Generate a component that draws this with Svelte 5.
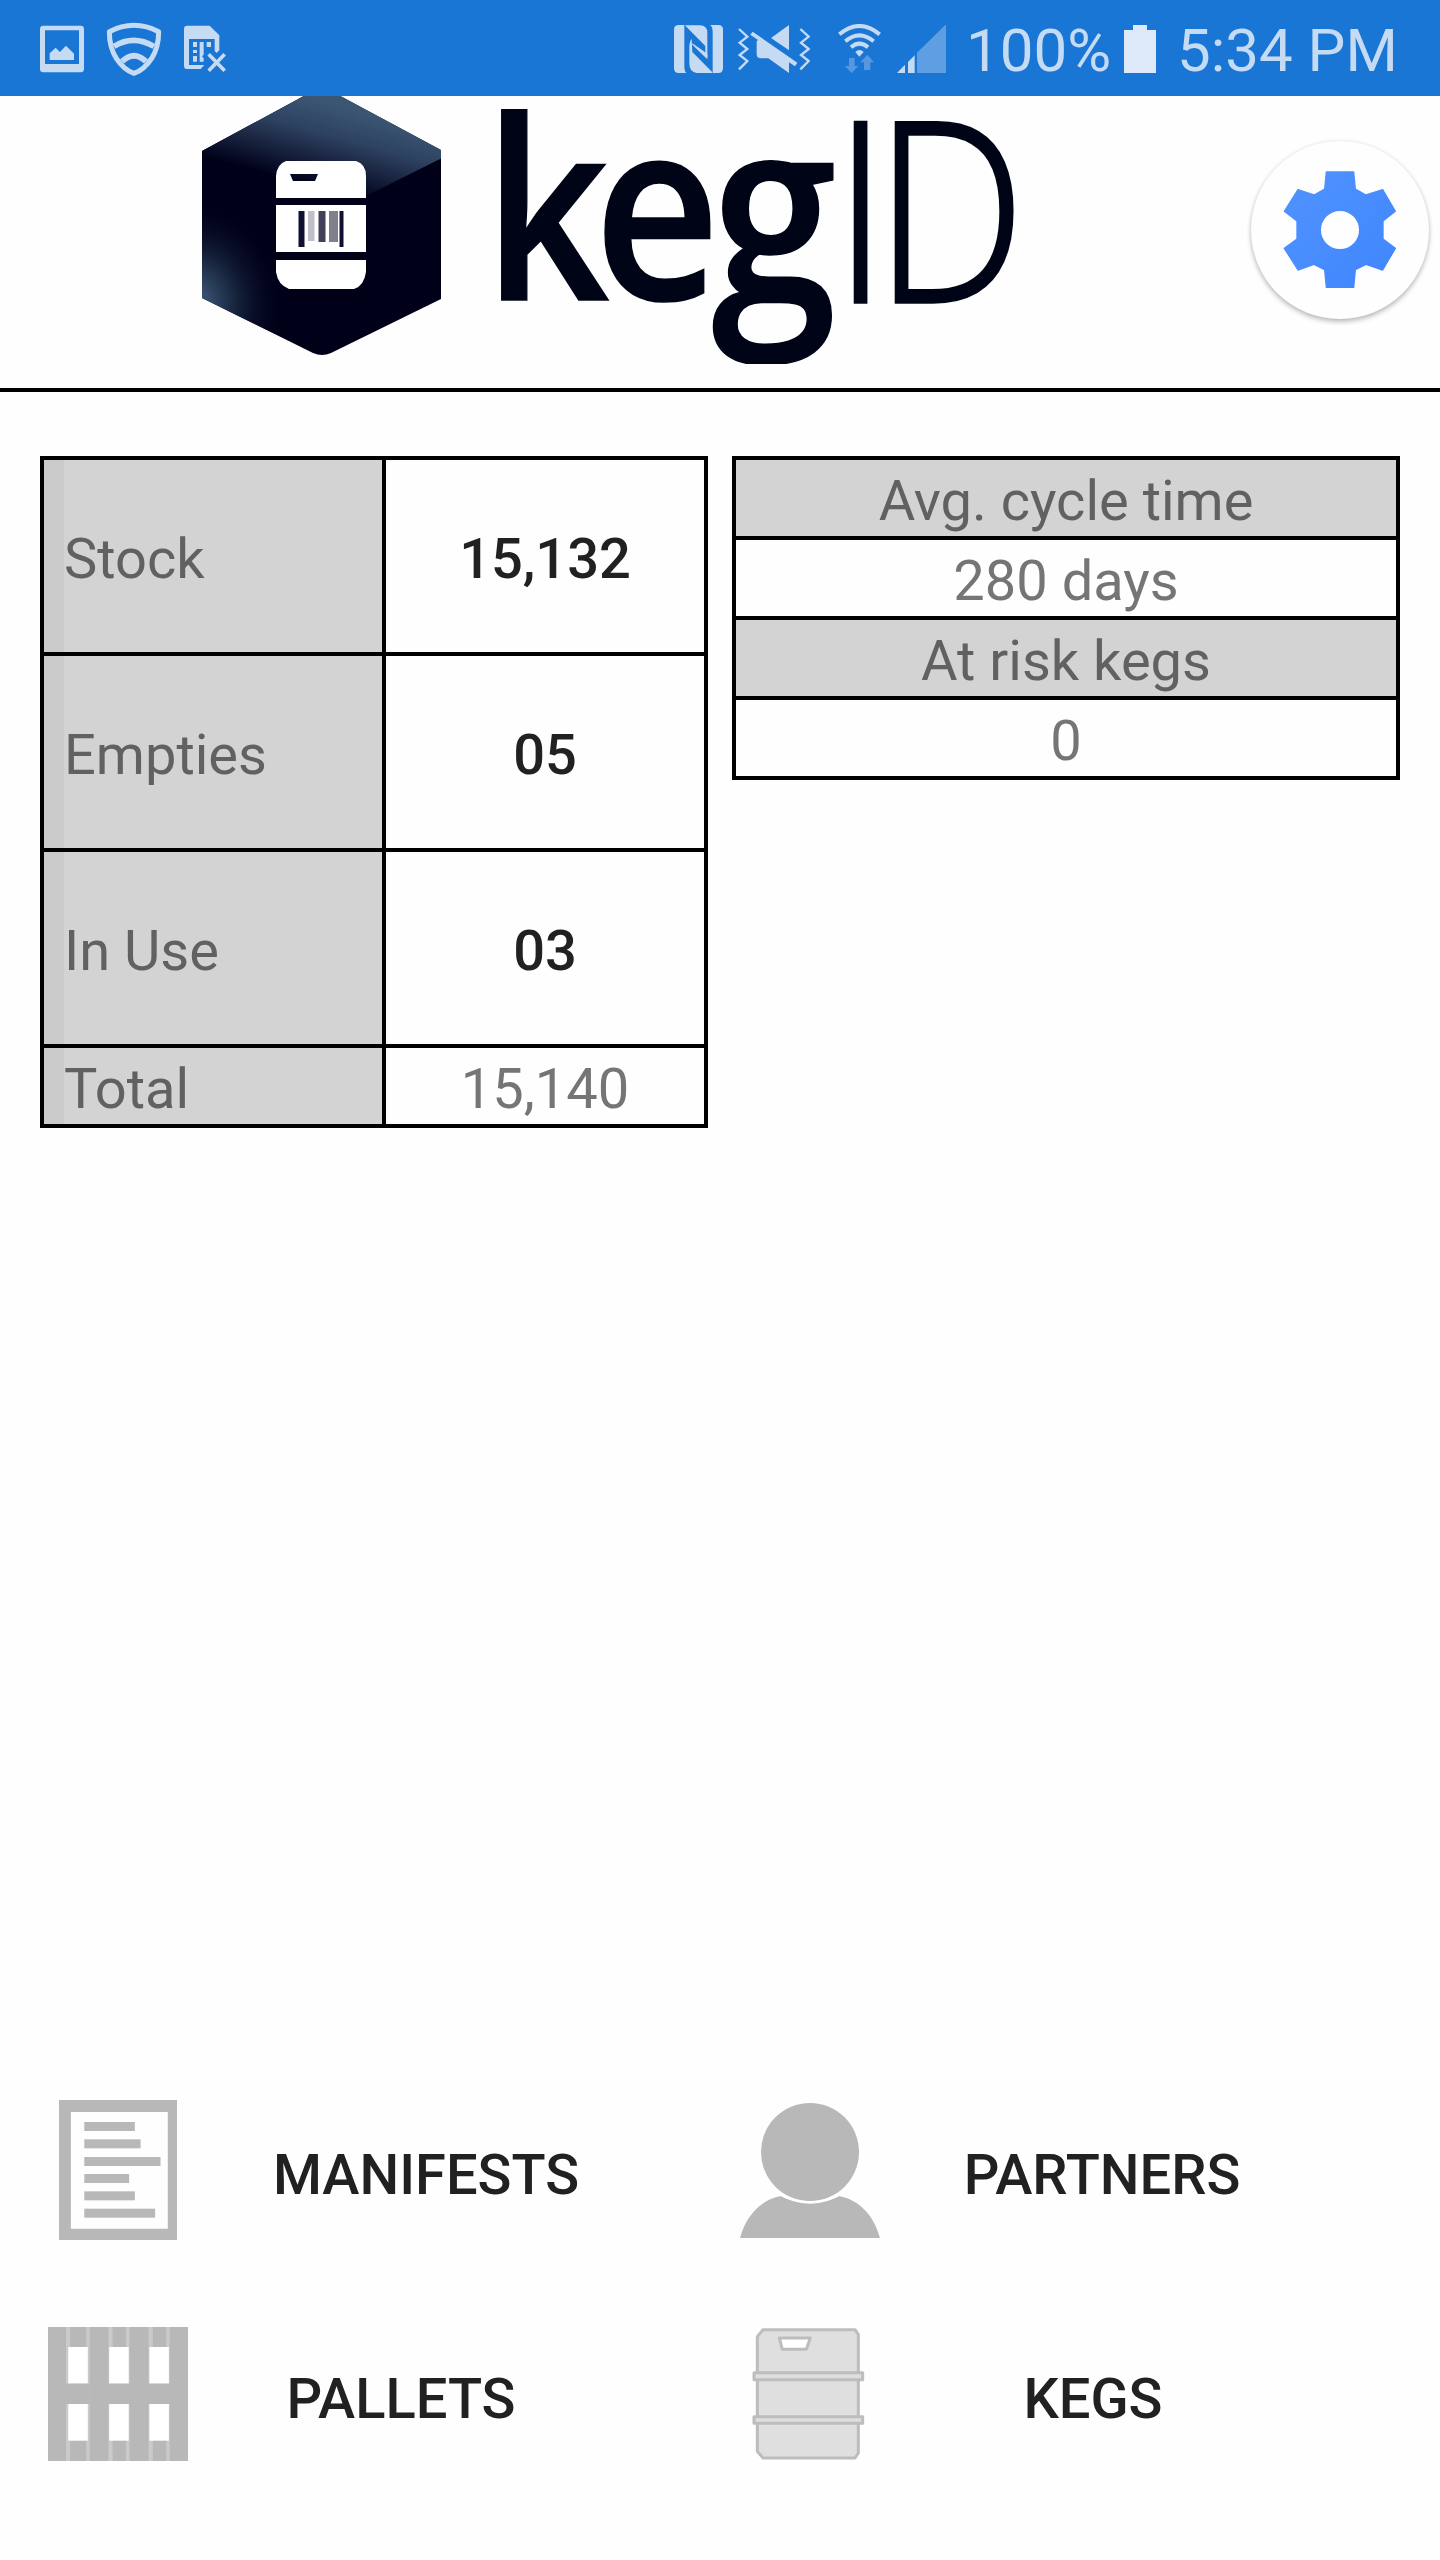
<script>
  const stock = [
    { label: 'Stock', value: '15,132' },
    { label: 'Empties', value: '05' },
    { label: 'In Use', value: '03' },
    { label: 'Total', value: '15,140', total: true }
  ];
  const metrics = [
    { label: 'Avg. cycle time', value: '280 days' },
    { label: 'At risk kegs', value: '0' }
  ];
  const manifestLines = [
    { y: 126, w: 132 }, { y: 178, w: 147 }, { y: 231, w: 199 },
    { y: 282, w: 117 }, { y: 334, w: 132 }, { y: 386, w: 185 }
  ];
</script>

<div class="screen">
  <div class="status">
    <svg class="photo" width="44" height="48" viewBox="120 75 132 144">
      <path fill-rule="evenodd" d="M130 77H242Q252 77 252 87V207Q252 217 242 217H130Q120 217 120 207V87Q120 77 130 77ZM135 91V192H237V91ZM149 180V160L167 143L180 156L198 137L222 161V180Z" />
    </svg>
    <svg class="shield" width="56" height="54" viewBox="318 66 168 162">
      <g fill="none" stroke="#c5dbf4" stroke-width="15" stroke-linejoin="round">
        <path d="M328 95Q364 76 402 76Q440 76 476 95Q476 142 455 175Q432 210 402 220Q372 210 349 175Q328 142 328 95Z" />
        <path d="M342 139Q400 103 462 139" stroke-width="17" />
        <path d="M366 184Q402 150 438 184" stroke-width="17" />
      </g>
    </svg>
    <svg class="sim" width="44" height="48" viewBox="549 75 132 144">
      <path fill-rule="evenodd" d="M562 77H629L658 106V151L650 159L644 153V117H567V195H613L602 207H562Q552 207 552 197V87Q552 77 562 77Z" />
      <path d="M579 126h12v15h-12zM579 150h12v9h-12zM579 168h12v17h-12zM599 126h12v38l-5 5l5 6v10h-12zM620 126h13v15h-13z" />
      <path d="M626 163L674 212M674 163L626 212" fill="none" stroke="#c5dbf4" stroke-width="11" />
    </svg>
    <span class="grow"></span>
    <svg class="nfc" width="49" height="48" viewBox="42 45 147 144">
      <path d="M56 45H73V168Q73 184 79 189H56Q42 189 42 175V59Q42 45 56 45Z" />
      <path d="M175 45H151Q158 51 158 66V189H175Q189 189 189 175V59Q189 45 175 45Z" />
      <path d="M76 46H119Q142 46 142 69V144L136 138V108L76 47Z" />
      <path d="M88 189V112Q88 95 95 86L97 126L157 187V189H110Q88 187 88 160Z" fill-rule="evenodd" />
      <path d="M96 102L135 133V110L96 84Z" fill="#1a76d5" />
      <path d="M97 104L142 148V131L97 100Z" />
    </svg>
    <svg class="mute" width="73" height="48" viewBox="231 45 219 144">
      <g fill="none" stroke="#c5dbf4" stroke-width="7">
        <path d="M237 57L262 80L239 98L262 117L239 135L262 153L237 178" />
        <path d="M421 57L446 80L423 98L446 117L423 135L446 153L421 178" />
      </g>
      <path d="M387 45V121L333 84ZM278 65L412 158L405 169L387 157V189L325 145H303Q290 145 290 132V94L294 90L271 74Z" />
    </svg>
    <svg class="wifi" width="43" height="50" viewBox="534 42 129 150">
      <g fill="none" stroke="#c5dbf4" stroke-width="12">
        <path d="M538 73Q598 23 659 73" />
        <path d="M556 94Q598 58 641 94" />
        <path d="M573 112Q598 90 624 112" />
      </g>
      <path d="M586 126Q598 114 611 126L598 140Z" />
      <path opacity=".35" d="M567 144H584V168H595L575 190L555 168H567ZM622 134L642 157H631V180H612V157H601Z" />
    </svg>
    <svg class="signal" width="50" height="48" viewBox="708 45 150 144">
      <path d="M711 189L735 164V189ZM744 189V156L764 136V189Z" />
      <path opacity=".4" d="M771 189V128L858 43V189Z" />
    </svg>
    <span class="percent">100%</span>
    <svg class="battery" width="32" height="48" viewBox="0 0 32 48">
      <path fill="#dde9f8" d="M9 0H23V5H32V48H0V5H9Z" />
    </svg>
    <span class="clock">5:34 PM</span>
  </div>

  <header>
    <svg class="logo" width="814" height="268" viewBox="202 96 814 268">
      <defs>
        <linearGradient id="sheen" gradientUnits="userSpaceOnUse" x1="345" y1="108" x2="322" y2="190">
          <stop offset="0" stop-color="#3a5673" />
          <stop offset=".35" stop-color="#2e4261" />
          <stop offset="1" stop-color="#000018" />
        </linearGradient>
        <radialGradient id="glow" gradientUnits="userSpaceOnUse" cx="198" cy="300" r="105" gradientTransform="translate(198 300) rotate(-12) scale(.85 1) translate(-198 -300)">
          <stop offset="0" stop-color="#3d5c7a" />
          <stop offset=".45" stop-color="#142039" />
          <stop offset="1" stop-color="#000018" stop-opacity="0" />
        </radialGradient>
        <clipPath id="hex"><path d="M202 151L313 91Q322 86 331 91L441 150V299L331 353Q322 357 313 353L202 298Z" /></clipPath>
      </defs>
      <g clip-path="url(#hex)">
        <rect x="200" y="90" width="244" height="270" fill="#000018" />
        <path d="M200 90H444V157L366 196L276 182L200 158Z" fill="url(#sheen)" />
        <rect x="200" y="150" width="244" height="210" fill="url(#glow)" />
      </g>
      <path fill="#fff" fill-rule="evenodd" d="M286 161H356Q366 164 366 176V198H276V176Q277 164 286 161ZM290 174L293 181H315L318 174Z" />
      <rect x="276" y="205" width="90" height="47" fill="#fff" />
      <path fill="#fff" d="M276 260H366V272Q364 286 354 289H289Q278 285 276 272Z" />
      <rect x="298.500" y="211" width="6" height="36" fill="#101030" />
      <rect x="308" y="211" width="6.500" height="30" fill="#c0c0c8" />
      <rect x="318.500" y="211" width="7" height="31" fill="#404058" />
      <rect x="329" y="211" width="9" height="31" fill="#80808c" />
      <rect x="339.500" y="211" width="4" height="36" fill="#101030" />
      <g fill="#000417" stroke="#000417" font-family="'Open Sans', sans-serif">
        <text transform="translate(0 300) scale(.875 1)" x="553 679 813" font-size="250" font-weight="600" stroke-width="1.500">ke<tspan font-size="258" dy="3">g</tspan></text>
        <text transform="translate(0 302) scale(.85 1)" x="981 1029" font-size="251" font-weight="300" stroke-width="3.500">ID</text>
      </g>
    </svg>
    <button class="fab" aria-label="Settings">
      <svg width="118" height="118" viewBox="183 153 354 354">
        <defs>
          <linearGradient id="gear" x1="0" y1="0" x2="1" y2="1">
            <stop offset="0" stop-color="#5093ff" />
            <stop offset="1" stop-color="#4086fd" />
          </linearGradient>
        </defs>
        <path fill="url(#gear)" stroke="url(#gear)" stroke-width="4" stroke-linejoin="round" fill-rule="evenodd" d="M319 156H401L406 207L438 225L488 209L526 274L489 303V357L526 385L488 450L438 433L406 449L401 502H319L314 449L282 433L234 450L193 385L231 357V303L193 274L234 209L282 225L314 207ZM360 271A59 59 0 1 0 360 389A59 59 0 1 0 360 271Z" />
      </svg>
    </button>
  </header>

  <main>
    <div class="table stock">
      {#each stock as row}
        <div class="row" class:total={row.total}>
          <div class="label">{row.label}</div>
          <div class="value">{row.value}</div>
        </div>
      {/each}
    </div>
    <div class="table metrics">
      {#each metrics as m}
        <div class="cell head">{m.label}</div>
        <div class="cell">{m.value}</div>
      {/each}
    </div>
  </main>

  <nav>
    <a class="item manifests" href="#manifests">
      <svg width="118" height="140" viewBox="102 60 308 420" preserveAspectRatio="none">
        <path fill="#b8b8b8" fill-rule="evenodd" d="M102 60H410V480H102ZM133 96V446H386V96Z" />
        {#each manifestLines as l}
          <rect x="168" y={l.y} width={l.w} height="27" fill="#b8b8b8" />
        {/each}
      </svg>
      <span>MANIFESTS</span>
    </a>
    <a class="item partners" href="#partners">
      <svg width="140" height="135" viewBox="0 0 140 135">
        <g fill="#b8b8b8">
          <circle cx="70" cy="49" r="49" />
          <path d="M0 135C6 113 20 97 41 93Q70 107 99 93C120 97 134 113 140 135Z" />
        </g>
        <path d="M36 89Q70 110 104 89" fill="none" stroke="#fff" stroke-width="2.500" />
      </svg>
      <span>PARTNERS</span>
    </a>
    <a class="item pallets" href="#pallets">
      <svg width="140" height="134" viewBox="73 741 366 402" preserveAspectRatio="none">
        <rect x="73" y="741" width="366" height="402" fill="#b8b8b8" />
        {#each [[120, 186], [231, 290], [336, 395]] as [a, b]}
          <rect x={a} y="741" width="11" height="402" fill="#cacaca" />
          <rect x={b - 13} y="741" width="9" height="402" fill="#cacaca" />
        {/each}
        {#each [126, 233, 338] as x}
          <rect {x} y="801" width="51" height="110" fill="#fff" />
          <rect x={x - 6} y="911" width="62" height="61" fill="#b8b8b8" />
          <rect {x} y="972" width="51" height="110" fill="#fff" />
        {/each}
      </svg>
      <span>PALLETS</span>
    </a>
    <a class="item kegs" href="#kegs">
      <svg width="114" height="134" viewBox="34 21 342 402">
        <g fill="#dfdfdf" stroke="#bdbdbd" stroke-width="9" stroke-linejoin="round">
          <path d="M70 29H346L356 44V399L346 414H70L53 394V50Z" />
          <path d="M119 54H212L200 88H128Z" fill="#fff" />
          <path d="M43 158H369V179H43ZM43 290H369V310H43Z" />
        </g>
      </svg>
      <span>KEGS</span>
    </a>
  </nav>
</div>

<style>
  :global(body) { background: #fefefe; }
  .screen {
    width: 1440px;
    height: 2560px;
    display: flex;
    flex-direction: column;
    background: #fefefe;
    font-family: Roboto, sans-serif;
    font-size: 56px;
    color: #757575;
    overflow: hidden;
  }
  svg { display: block; flex: none; }
  .status {
    box-sizing: border-box;
    height: 96px;
    flex: none;
    padding: 2px 42px 0 40px;
    display: flex;
    align-items: center;
    background: #1a76d5;
    color: #c5dbf4;
    fill: #c5dbf4;
    font-size: 60px;
    line-height: 90px;
    white-space: nowrap;
  }
  .status span { padding-top: 4px; }
  .shield { margin-left: 22px; }
  .sim { margin-left: 21px; }
  .grow { flex: 1; }
  .mute { margin-left: 14px; }
  .wifi { margin-left: 28px; }
  .signal { margin-left: 15px; }
  .percent { width: 145px; margin-left: 20px; }
  .battery { margin-left: 13px; }
  .clock { width: 221px; margin-left: 21px; }
  header {
    box-sizing: border-box;
    height: 296px;
    flex: none;
    padding: 0 11px 0 202px;
    display: flex;
    justify-content: space-between;
    border-bottom: 4px solid #000;
  }
  .fab {
    width: 178px;
    height: 178px;
    margin-top: 45px;
    padding: 0;
    border: 0;
    border-radius: 50%;
    background: #fefefe;
    display: flex;
    align-items: center;
    justify-content: center;
    box-shadow: 0 3px 5px rgba(0, 0, 0, .24), 0 0 4px rgba(0, 0, 0, .08);
  }
  main {
    flex: 1;
    display: flex;
    align-items: flex-start;
    gap: 24px;
    padding: 64px 40px 0;
  }
  .table {
    box-sizing: border-box;
    width: 668px;
    padding: 4px;
    display: flex;
    flex-direction: column;
    gap: 4px;
    background: #000;
    line-height: 70px;
  }
  .row {
    display: grid;
    grid-template-columns: 338px 318px;
    gap: 4px;
    height: 192px;
    line-height: 186px;
  }
  .row.total { height: 76px; line-height: 70px; }
  .label, .value, .cell { box-sizing: border-box; padding-top: 6px; }
  .label {
    border-left: 20px solid #cbcbcb;
    background: #d3d3d3;
    color: #616161;
  }
  .value {
    background: #fefefe;
    color: #212121;
    font-weight: 500;
    text-align: center;
  }
  .total .value { color: #757575; font-weight: 400; }
  .cell { height: 76px; background: #fefefe; text-align: center; }
  .cell.head { background: #d3d3d3; color: #616161; }
  nav {
    flex: none;
    display: grid;
    grid-template-columns: 692px 748px;
    grid-template-rows: 224px 224px;
    padding-bottom: 54px;
  }
  .item {
    display: flex;
    align-items: center;
    color: #212121;
    font-weight: 500;
    text-decoration: none;
  }
  .item span { flex: none; padding-top: 10px; text-align: center; }
  .manifests { padding-left: 59px; }
  .manifests span { margin-left: 69px; width: 360px; }
  .partners { padding-left: 48px; }
  .partners span { margin-left: 42px; width: 360px; }
  .pallets { padding-left: 48px; }
  .pallets span { margin-left: 33px; width: 360px; }
  .kegs { padding-left: 59px; }
  .kegs span { margin-left: 48px; width: 360px; }
</style>
